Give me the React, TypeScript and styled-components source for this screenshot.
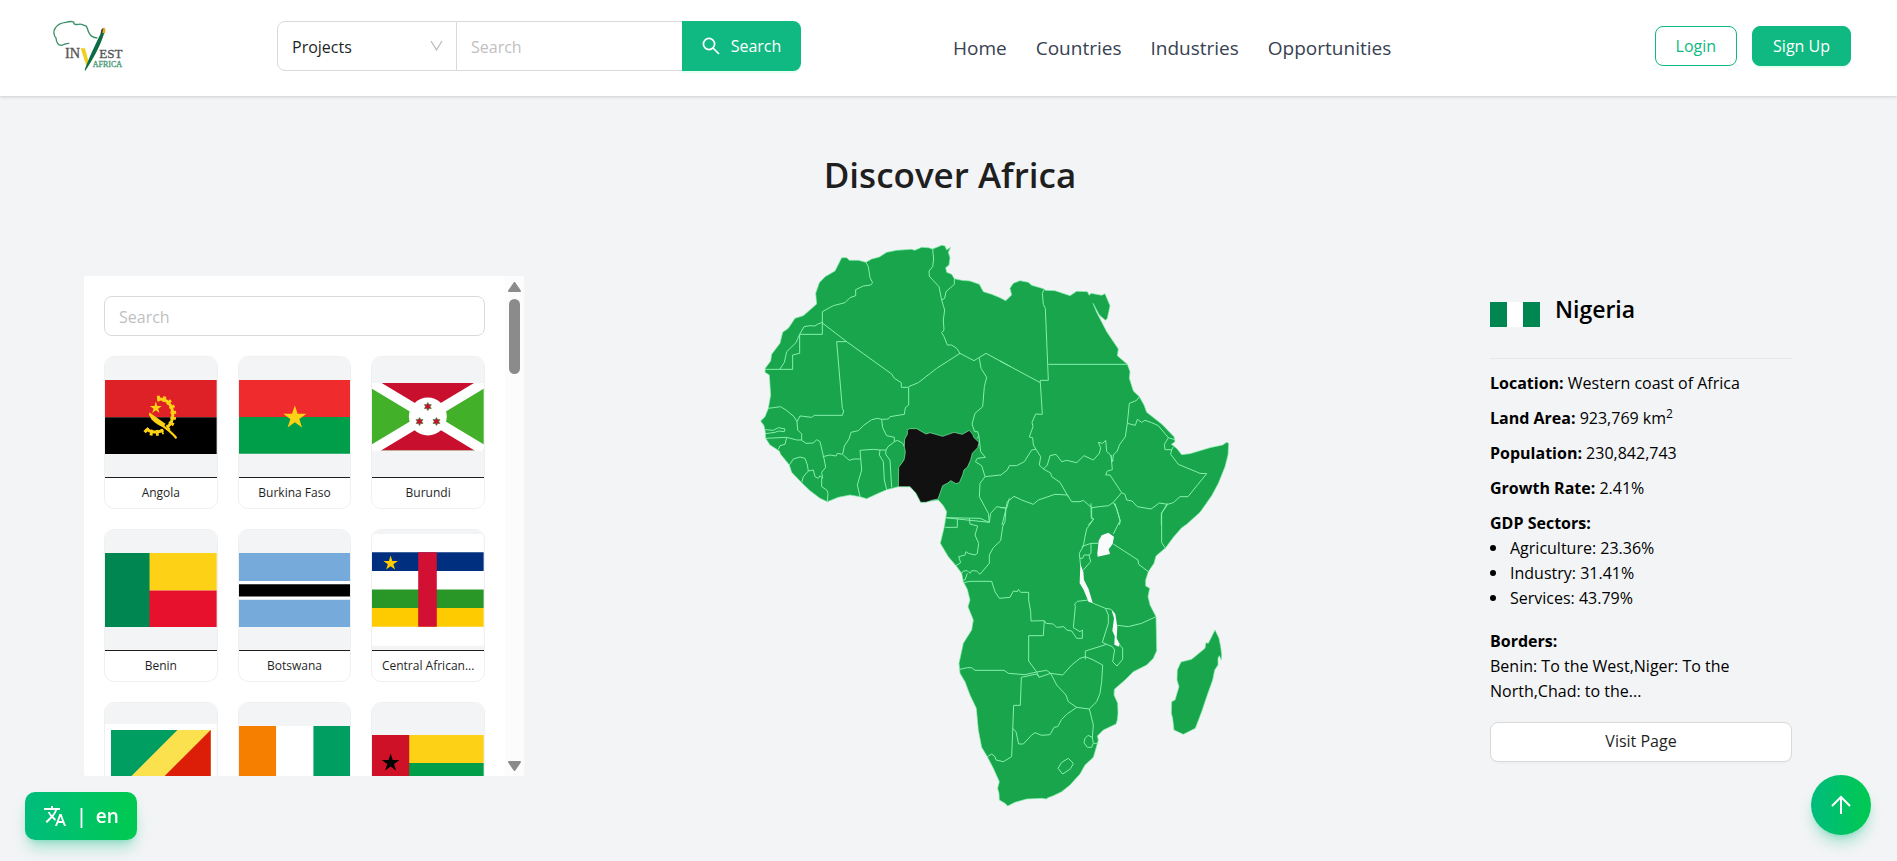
import React from "react";
import styled, { createGlobalStyle } from "styled-components";
import { MdTranslate } from "react-icons/md";

const GlobalStyle = createGlobalStyle`
  *, *::before, *::after { box-sizing: border-box; }
  body {
    margin: 0;
    background: #f3f4f6;
    color: #1f1f1f;
    font-family: "Open Sans", "Noto Sans", sans-serif;
    font-size: 16px;
  }
  button, input, select { font: inherit; }
  h1, h2, p, ul { margin: 0; padding: 0; }
`;

const Header = styled.header`
  display: flex;
  align-items: center;
  height: 96px;
  padding: 0 46px 4px 40px;
  background: #fff;
  box-shadow: 0 1px 3px rgba(0, 0, 0, 0.16);
`;

const LogoLink = styled.a`
  display: block;
  flex: none;
  height: 70px;
`;

const SearchForm = styled.form`
  display: flex;
  width: 524px;
  height: 50px;
  margin-left: 137px;
`;

const SelectWrap = styled.div`
  display: grid;
  flex: none;
  width: 180px;
  align-items: center;
  border: 1px solid #d9d9d9;
  border-radius: 8px 0 0 8px;

  > * { grid-area: 1 / 1; }
  > svg { justify-self: end; margin-right: 13px; pointer-events: none; }
`;

const Select = styled.select`
  width: 100%;
  height: 100%;
  padding: 2px 14px 0;
  border: 0;
  background: transparent;
  color: #1f1f1f;
  appearance: none;
  outline: none;
`;

const TextInput = styled.input`
  padding: 2px 14px 0;
  background: #fff;
  outline: none;
  &::placeholder { color: #bfbfbf; }
`;

const SearchInput = styled(TextInput)`
  flex: 1;
  min-width: 0;
  border: solid #d9d9d9;
  border-width: 1px 0;
`;

const SearchButton = styled.button`
  display: flex;
  flex: none;
  width: 119px;
  align-items: center;
  justify-content: center;
  gap: 11px;
  padding: 0;
  border: 0;
  border-radius: 0 8px 8px 0;
  background: #10b981;
  color: #fff;
  box-shadow: 0 2px 0 rgba(5, 255, 105, 0.1);
`;

const Nav = styled.nav`
  display: flex;
  gap: 29px;
  margin: 4px auto 0 152px;
`;

const NavLink = styled.a`
  color: #374151;
  font-size: 19px;
  line-height: 28px;
  text-decoration: none;
`;

const Actions = styled.div`
  display: flex;
  gap: 15px;
`;

const ActionButton = styled.button<{ $solid?: boolean }>`
  height: 40px;
  padding: 0 20px;
  border: 1px solid #10b981;
  border-radius: 8px;
  background: ${(p) => (p.$solid ? "#10b981" : "#fff")};
  color: ${(p) => (p.$solid ? "#fff" : "#10b981")};
  box-shadow: ${(p) => (p.$solid ? "0 2px 0 rgba(5, 255, 105, 0.1)" : "none")};
`;

const Main = styled.main`
  padding: 49px 105px 50px 84px;
`;

const Title = styled.h1`
  margin-bottom: 38px;
  padding-left: 24px;
  font-size: 35px;
  font-weight: 600;
  line-height: 60px;
  text-align: center;
`;

const Columns = styled.div`
  display: grid;
  grid-template-columns: 440px 1fr 302px;
  align-items: center;
`;

const Panel = styled.section`
  display: flex;
  height: 500px;
  background: #fcfcfc;
`;

const PanelBody = styled.div`
  flex: 1;
  height: 100%;
  padding: 20px;
  overflow-y: auto;
  scrollbar-width: none;
  border-radius: 5px;
  background: #fff;
`;

const FilterInput = styled(TextInput)`
  display: block;
  width: 100%;
  height: 40px;
  margin-bottom: 20px;
  border: 1px solid #d9d9d9;
  border-radius: 8px;
`;

const CardGrid = styled.div`
  display: grid;
  grid-template-columns: repeat(3, minmax(0, 1fr));
  gap: 20px;
`;

const Card = styled.article`
  overflow: hidden;
  border: 1px solid #f0f0f0;
  border-radius: 10px;
  background: #fff;
`;

const CardFlag = styled.div`
  display: flex;
  height: 121px;
  align-items: center;
  border-bottom: 1px solid #1f1f1f;
  background: #f3f4f6;
  svg { display: block; width: 100%; height: auto; }
`;

const CardName = styled.p`
  padding: 5px 8px;
  overflow: hidden;
  font-size: 12px;
  line-height: 20px;
  text-align: center;
  text-overflow: ellipsis;
  white-space: nowrap;
`;

const ScrollBar = styled.div`
  display: flex;
  flex-direction: column;
  align-items: center;
  width: 19px;
  padding: 6px 0 5px;
  svg { display: block; }
`;

const ScrollThumb = styled.div`
  width: 11px;
  height: 75px;
  margin: 7px 0 auto;
  border-radius: 6px;
  background: #8b8b8b;
`;

const MapArea = styled.div`
  display: flex;
  justify-content: center;
  padding-right: 26px;
  svg { display: block; }
`;

const Info = styled.aside`
  color: #000;
  line-height: 25px;
`;

const InfoHead = styled.div`
  display: flex;
  align-items: flex-end;
  gap: 15px;
  padding-bottom: 31px;
  margin-bottom: 12px;
  border-bottom: 1px solid #e5e7eb;
  svg { display: block; }
`;

const InfoName = styled.h2`
  font-size: 23px;
  font-weight: 600;
  line-height: 36px;
`;

const Fact = styled.p`
  margin-bottom: 10px;
  sup { font-size: 12px; line-height: 0; }
`;

const Block = styled.div`
  margin-bottom: 18px;
`;

const Sectors = styled.ul`
  list-style: none;
`;

const Sector = styled.li`
  display: flex;
  align-items: center;
  gap: 14px;
  &::before {
    width: 6px;
    height: 6px;
    border-radius: 50%;
    background: #000;
    content: "";
  }
`;

const VisitButton = styled.button`
  display: block;
  width: 100%;
  height: 40px;
  border: 1px solid #d9d9d9;
  border-radius: 8px;
  background: #fff;
  color: #1f1f1f;
  box-shadow: 0 2px 0 rgba(0, 0, 0, 0.02);
`;

const Floating = styled.button`
  position: fixed;
  display: flex;
  align-items: center;
  justify-content: center;
  border: 0;
  background: linear-gradient(to right, #00bc7d, #00c950);
  color: #fff;
  box-shadow: 0 10px 15px -3px rgba(0, 188, 125, 0.35), 0 4px 6px -4px rgba(0, 188, 125, 0.35);
`;

const LanguageButton = styled(Floating)`
  bottom: 21px;
  left: 25px;
  width: 112px;
  height: 48px;
  gap: 9px;
  border-radius: 10px;
  font-size: 19px;
  font-weight: 600;
`;

const TopButton = styled(Floating)`
  right: 26px;
  bottom: 26px;
  width: 60px;
  height: 60px;
  border-radius: 50%;
`;

function starPoints(cx: number, cy: number, r: number, points = 5, inner = 0.382) {
  return Array.from({ length: points * 2 }, (_, i) => {
    const a = (Math.PI * i) / points - Math.PI / 2;
    const d = i % 2 ? r * inner : r;
    return `${(cx + d * Math.cos(a)).toFixed(1)},${(cy + d * Math.sin(a)).toFixed(1)}`;
  }).join(" ");
}

const Angola = () => (
  <svg viewBox="0 0 336 225">
    <path fill="#de2027" d="M0 0h336v112H0z" />
    <path fill="#000" d="M0 112h336v113H0z" />
    <g fill="none" stroke="#fcd116">
      <path strokeWidth="9" d="M157 58C188 54 204 78 204 104C204 122 196 136 186 142M124 146C134 158 158 160 176 151" />
      <path strokeWidth="17" strokeDasharray="8 9" d="M157 56C190 52 206 78 206 104C206 122 198 138 188 144M122 148C134 162 158 162 174 154" />
      <path strokeWidth="7" strokeLinecap="round" d="M136 104C152 128 190 144 213 173" />
    </g>
    <path fill="#fcd116" d="M133 97L182 132L176 142C150 132 133 118 133 97z" />
    <polygon fill="#fcd116" points={starPoints(153, 84, 19)} />
  </svg>
);

const BurkinaFaso = () => (
  <svg viewBox="0 0 336 222">
    <path fill="#ef2b2d" d="M0 0h336v111H0z" />
    <path fill="#009e49" d="M0 111h336v111H0z" />
    <polygon fill="#fcd116" points={starPoints(168, 113, 37)} />
  </svg>
);

const Burundi = () => (
  <svg viewBox="0 0 336 202">
    <path fill="#43b02a" d="M0 0h336v202H0z" />
    <path fill="#c8102e" d="M0 0h336L168 101L336 202H0L168 101z" />
    <path stroke="#fff" strokeWidth="30" d="M0 0L336 202M336 0L0 202" />
    <circle cx="168" cy="101" r="57" fill="#fff" />
    <g fill="#c8102e" stroke="#43803a" strokeWidth="2">
      <polygon points={starPoints(168, 71, 12, 6, 0.577)} />
      <polygon points={starPoints(143, 116, 12, 6, 0.577)} />
      <polygon points={starPoints(194, 116, 12, 6, 0.577)} />
    </g>
  </svg>
);

const Benin = () => (
  <svg viewBox="0 0 336 225">
    <path fill="#fcd116" d="M0 0h336v113H0z" />
    <path fill="#e8112d" d="M0 113h336v112H0z" />
    <path fill="#008751" d="M0 0h134v225H0z" />
  </svg>
);

const Botswana = () => (
  <svg viewBox="0 0 336 225">
    <path fill="#75aadb" d="M0 0h336v225H0z" />
    <path fill="#fff" d="M0 84h336v57H0z" />
    <path fill="#000" d="M0 94h336v37H0z" />
  </svg>
);

const CentralAfrica = () => (
  <svg viewBox="0 0 336 336">
    <path fill="#fff" d="M0 0h336v336H0z" />
    <path fill="#002f7f" d="M0 55h336v56H0z" />
    <path fill="#289728" d="M0 167h336v56H0z" />
    <path fill="#fecb00" d="M0 223h336v56H0z" />
    <path fill="#d21034" d="M139 55h56v224h-56z" />
    <polygon fill="#fecb00" points={starPoints(56, 88, 23)} />
  </svg>
);

const Congo = () => (
  <svg viewBox="0 0 336 236">
    <path fill="#fff" d="M0 0h336v236H0z" />
    <path fill="#009e60" d="M18 18h300v200H18z" />
    <path fill="#fbe14d" d="M218 18h100v200H18z" />
    <path fill="#dc1e08" d="M318 18v200H118z" />
  </svg>
);

const IvoryCoast = () => (
  <svg viewBox="0 0 336 225">
    <path fill="#f77f00" d="M0 0h112v225H0z" />
    <path fill="#fff" d="M112 0h112v225H112z" />
    <path fill="#009e60" d="M224 0h112v225H224z" />
  </svg>
);

const GuineaBissau = () => (
  <svg viewBox="0 0 336 168">
    <path fill="#fcd116" d="M0 0h336v84H0z" />
    <path fill="#009e49" d="M0 84h336v84H0z" />
    <path fill="#ce1126" d="M0 0h112v168H0z" />
    <polygon fill="#000" points={starPoints(56, 84, 28)} />
  </svg>
);

const countries = [
  { name: "Angola", Flag: Angola },
  { name: "Burkina Faso", Flag: BurkinaFaso },
  { name: "Burundi", Flag: Burundi },
  { name: "Benin", Flag: Benin },
  { name: "Botswana", Flag: Botswana },
  { name: "Central African...", Flag: CentralAfrica },
  { name: "Congo", Flag: Congo },
  { name: "Ivory Coast", Flag: IvoryCoast },
  { name: "Guinea-Bissau", Flag: GuineaBissau },
];

const Logo = () => (
  <svg width="100" height="70" viewBox="0 3 300 210" role="img" aria-label="Invest Africa">
    <path
      fill="none"
      stroke="#3d8f68"
      strokeWidth="4"
      d="M88 100C80 99 74 104 64 106C52 106 49 96 48 84C40 76 40 62 46 54C54 40 66 38 78 37C88 34 96 34 101 36C100 44 108 44 116 43C124 40 130 46 138 48C144 54 142 62 148 70C152 78 160 83 172 84"
    />
    <g fontFamily="Liberation Serif, serif">
      <text x="75" y="145" fontSize="43" fill="#555" stroke="#555">IN</text>
      <text x="178" y="145" fontSize="39" fill="#555" stroke="#555">EST</text>
      <text x="158" y="171" fontSize="24" fill="#4c9a76" stroke="#4c9a76">AFRICA</text>
    </g>
    <path fill="#f2cf1f" d="M122 115h13l10 38l-6 14z" />
    <path fill="#0d6b45" d="M184 66L193 68C182 105 158 150 136 182L134 180C146 145 168 100 184 66z" />
    <path fill="#dcae1c" d="M184 66C184 58 190 52 194 54C198 60 196 66 194 71z" />
    <path fill="#3c3c3c" d="M182 70C182 60 186 55 190 54L186 72z" />
  </svg>
);

const coast =
  "M275 68L290 68L298 76L325 76L348 82L365 72L388 66L410 52L440 46L485 43L494 46L515 37L535 38L548 42L575 31L585 33L590 45L602 37L595 52L600 68L597 90L587 98L590 112L605 118L613 131L635 136L660 138L688 148L700 170L725 178L750 188L767 197L785 180L780 160L790 145L810 137L835 142L845 151L883 162L885 166L915 167L960 182L980 169L1012 170L1018 181L1023 175L1055 181L1065 176L1080 212L1072 250L1066 256L1048 240L1029 205L1040 232L1070 290L1105 342L1102 362L1132 388L1140 410L1138 430L1150 468L1168 485L1182 510L1190 532L1235 567L1272 605L1275 620L1264 628L1280 640L1295 659L1320 656L1380 638L1418 630L1430 622L1436 625L1434 660L1425 695L1405 745L1385 782L1350 832L1310 868L1295 878L1270 907L1247 938L1218 963L1212 985L1195 1010L1187 1035L1187 1053L1199 1060L1194 1085L1200 1110L1218 1145L1219 1190L1220 1247L1210 1270L1190 1290L1150 1310L1125 1335L1093 1363L1092 1380L1103 1405L1104 1435L1102 1455L1098 1467L1060 1485L1042 1503L1045 1515L1035 1550L1030 1567L1005 1590L990 1617L960 1650L935 1670L910 1682L892 1689L890 1692L875 1690L830 1692L795 1702L773 1713L765 1705L748 1695L747 1675L743 1660L748 1640L730 1600L712 1565L695 1537L685 1485L679 1420L660 1380L645 1340L630 1315L627 1285L640 1225L665 1185L670 1155L654 1115L660 1095L652 1063L640 1040L635 1015L618 992L595 965L571 925L583 875L590 830L580 812L565 795L530 800L512 802L498 775L480 755L445 755L410 764L385 775L350 791L330 785L300 780L265 787L232 800L210 790L180 767L155 743L125 712L118 690L92 658L88 648L60 630L47 610L46 590L42 572L32 558L45 545L55 520L62 480L58 420L45 412L46 400L62 378L65 358L90 325L98 292L115 280L135 250L160 242L200 207L197 175L208 143L225 125L255 108z";

const nigeria =
  "M478 581L500 581L528 597L540 593L578 604L612 592L637 598L658 586L668 598L672 608L687 622L683 638L667 655L662 675L652 697L642 705L638 720L628 743L618 746L602 737L594 744L578 752L570 775L564 792L545 796L528 802L512 802L498 775L480 755L445 755L446 697L462 675L466 652L463 635L464 612L472 598L472 586z";

const madagascar =
  "M615 390L627 415L632 440L635 465L634 480L628 467L624 475L624 495L614 510L608 540L590 590L575 635L556 685L520 703L492 690L488 655L484 640L485 605L495 600L507 560L501 540L502 510L513 486L545 478L585 445L588 428L595 430L605 410z";

// Borders of the north-west, the north-east and the south of the continent.
const bordersNorthWest =
  "M348 82L355 95L360 128L368 143L362 150L340 153L317 164V182L300 188L285 203L250 212L217 230V298H149M217 262L202 268L195 273L180 272L162 275L149 298L138 323L110 350L103 382L90 402M149 298V355L128 360V403H46M217 264L290 320H260L277 520L281 528L277 541H193L185 547L160 544L150 543L141 560L132 545L108 525L92 515L70 518L55 520M290 320L425 417L433 430L454 443V457H476V510L466 518L463 538L420 545L415 552L395 553L383 550L365 554L340 572L325 587L303 592L297 612L283 633L278 658L262 655L258 663L240 660L218 665M476 455L505 443L560 400L630 355L672 377L708 355L780 394M548 42L551 72L548 95L537 108L538 124L567 155L575 195L584 190L588 170L613 148V131M575 195L584 225L580 255L582 285L575 293L582 305L592 330L605 330L620 340L630 355M688 370L693 400L710 427L703 455L698 515L675 535L666 567L674 590H683L687 605L680 610M395 553L398 578L410 602L433 607V620L414 635L408 645L390 645L370 643L330 646L335 705L322 750L330 785M433 620L443 616L458 625L463 635M390 645L388 660L400 680L403 735L410 764M408 645L407 658L420 675L425 757M330 672L310 672L298 676L280 660M141 560L143 585L155 597V616L168 625L190 624L200 614L210 620L217 650L223 675L227 697L215 712L218 730L210 722L205 730L195 725L190 705L175 708L172 690L165 670L150 666L130 672L118 690M175 708L160 725L155 743M215 730V755L230 765L234 775L232 800M47 610L110 607L140 615H155M110 607L105 628L90 632L85 643M46 584L70 586L85 578L105 582L103 590L85 588L75 592L46 596M687 605L692 650L706 667L682 670L676 680L695 692L705 725L690 745L688 785L715 835L718 862L585 848M705 725L750 720M718 862L722 835L740 815L770 820L778 790";

const bordersNorthEast =
  "M133 162L127 175L130 208L136 220L145 436H121V443L0 378M145 388H382M121 443L127 538L107 537L96 562L99 575L88 606L98 608L100 630L108 643L95 645L73 680L50 692H28L22 705L0 722M108 643L122 665L118 690L130 702L142 690L150 662L168 658L185 680L200 676L230 683L252 662L280 675L298 655L302 638L295 622L308 625L317 616L320 650L332 660L338 680L340 660L352 648L358 630L376 605L382 565L388 505L410 496L418 485M382 565L406 571L412 553L425 562L435 556L455 563L475 572L505 608L524 614M505 608L493 628L495 644H515L520 636M515 644L512 658L535 688L600 715L620 716L564 785L540 785L520 803L503 808L484 835V870M503 808L478 804L453 822L412 815L396 798L380 795L375 778L365 773L330 720L317 720L322 708L337 704L333 660M365 773L340 802L326 812L298 815L275 818L250 796L240 800L215 800L202 780L180 742L155 725L152 714L130 702M202 780L165 778L115 795L100 808L65 795L42 784L22 800L16 830L6 870M202 780L206 786M275 818V848L281 852L265 870M340 802L351 823L361 858L358 870M0 818H17";

const bordersSouth =
  "M633 10L634 55L641 57L620 87L615 110L610 138L598 160L602 200M654 130H633L610 138L605 140M633 130V160L627 165H612L608 175H600M627 165L632 185L610 210M705 10L720 62L700 102M700 132L774 180L776 193L805 215M862 10L845 40V128L857 146M196 82H232V55M196 53L300 55L328 67M268 55L270 72L293 78L285 105L296 130L292 160L285 165L265 160L258 155L255 165L236 170L242 188L228 197M378 25L375 65L368 80L362 122L340 143L328 165V190L300 223L290 213L275 212L270 220L262 212L250 213L245 220M262 220L255 240H250M250 248L270 244H335L345 275L358 295L390 292L400 273L412 275L415 268L422 277H446V300L452 335L453 363L493 362L498 370L520 372L530 382L552 380L560 390L575 393L590 415H607V390L600 395L580 383L586 320L584 312L592 304L625 300L640 310L676 325L694 328M493 362L490 407H446V483L470 516L435 524L385 520L372 511H285L275 503H262L240 508M470 516L500 511L512 520L548 525L575 495L600 475L616 470L636 478L668 495L665 545L660 580L650 605L628 627L640 675L637 715M616 478V453L680 433L697 440L704 450L698 485L711 498L728 478V445L720 436L718 430M676 325L685 345V370L667 427L680 433M712 376L745 380L785 370L828 350M470 516L477 532L512 520L530 555L558 585L565 605L590 622L628 627M477 532L470 522L424 532L421 616H401L395 770L370 785L348 780L345 770L335 762L322 770M398 685L408 695L416 732H430L455 705L465 698L485 706L510 704L522 682L533 680L545 658L560 643L590 622M624 706L615 715L612 728L622 742H635L640 730L637 712zM640 730H655M565 775L580 790L572 806L548 822L534 805L545 787z";

const AfricaMap = () => (
  <svg width="472" height="566" viewBox="24 24 1416 1698" role="img" aria-label="Map of Africa">
    <g fill="#18a54b" stroke="#86efac" strokeWidth="2" strokeLinejoin="round">
      <path d={coast} />
      <path transform="translate(780 795)" d={madagascar} />
      <g fill="none" strokeWidth="3">
        <path d={bordersNorthWest} />
        <path transform="translate(750 0)" d={bordersNorthEast} />
        <path transform="translate(390 795)" d={bordersSouth} />
      </g>
      <path d={nigeria} fill="#111" />
    </g>
    <g transform="translate(390 795)" fill="#f9fafb">
      <path d="M685 98L702 110L698 132L686 148L690 162L653 170L652 160L656 122L665 106z" />
      <path d="M601 192L610 215L612 240L626 268L638 308L626 306L610 268L599 250z" />
      <path d="M694 328L706 342L712 380L710 415L718 430L717 440L703 434L704 408L697 392L702 355z" />
    </g>
  </svg>
);

export default function App() {
  return (
    <>
      <GlobalStyle />
      <Header>
        <LogoLink href="#"><Logo /></LogoLink>
        <SearchForm onSubmit={(e) => e.preventDefault()}>
          <SelectWrap>
            <Select aria-label="Search in" defaultValue="Projects">
              <option>Projects</option>
              <option>Countries</option>
            </Select>
            <svg width="13" height="12" viewBox="0 0 13 12" fill="none" stroke="#bfbfbf" strokeWidth="1.4">
              <path d="M1 1L6.500 10L12 1" />
            </svg>
          </SelectWrap>
          <SearchInput aria-label="Search" placeholder="Search" />
          <SearchButton type="submit">
            <svg width="18" height="18" viewBox="0 0 18 18" fill="none" stroke="currentColor" strokeWidth="1.7">
              <circle cx="7" cy="7" r="5.600" />
              <path d="M11 11L17 17" />
            </svg>
            Search
          </SearchButton>
        </SearchForm>
        <Nav>
          <NavLink href="#">Home</NavLink>
          <NavLink href="#">Countries</NavLink>
          <NavLink href="#">Industries</NavLink>
          <NavLink href="#">Opportunities</NavLink>
        </Nav>
        <Actions>
          <ActionButton>Login</ActionButton>
          <ActionButton $solid>Sign Up</ActionButton>
        </Actions>
      </Header>

      <Main>
        <Title>Discover Africa</Title>
        <Columns>
          <Panel>
            <PanelBody>
              <FilterInput aria-label="Search countries" placeholder="Search" />
              <CardGrid>
                {countries.map(({ name, Flag }) => (
                  <Card key={name}>
                    <CardFlag><Flag /></CardFlag>
                    <CardName>{name}</CardName>
                  </Card>
                ))}
              </CardGrid>
            </PanelBody>
            <ScrollBar aria-hidden="true">
              <svg width="13" height="10" viewBox="0 0 13 10">
                <path fill="#8b8b8b" stroke="#8b8b8b" strokeWidth="2" strokeLinejoin="round" d="M6.500 1L12 9H1z" />
              </svg>
              <ScrollThumb />
              <svg width="13" height="10" viewBox="0 0 13 10">
                <path fill="#8b8b8b" stroke="#8b8b8b" strokeWidth="2" strokeLinejoin="round" d="M6.500 9L12 1H1z" />
              </svg>
            </ScrollBar>
          </Panel>

          <MapArea><AfricaMap /></MapArea>

          <Info>
            <InfoHead>
              <svg width="50" height="25" viewBox="0 0 50 25">
                <path fill="#008751" d="M0 0h50v25H0z" />
                <path fill="#fff" d="M17 0h16v25H17z" />
              </svg>
              <InfoName>Nigeria</InfoName>
            </InfoHead>
            <Fact><b>Location:</b> Western coast of Africa</Fact>
            <Fact><b>Land Area:</b> 923,769 km<sup>2</sup></Fact>
            <Fact><b>Population:</b> 230,842,743</Fact>
            <Fact><b>Growth Rate:</b> 2.41%</Fact>
            <Block>
              <b>GDP Sectors:</b>
              <Sectors>
                <Sector>Agriculture: 23.36%</Sector>
                <Sector>Industry: 31.41%</Sector>
                <Sector>Services: 43.79%</Sector>
              </Sectors>
            </Block>
            <Block>
              <b>Borders:</b>
              <p>Benin: To the West,Niger: To the North,Chad: to the...</p>
            </Block>
            <VisitButton>Visit Page</VisitButton>
          </Info>
        </Columns>
      </Main>

      <LanguageButton aria-label="Language">
        <MdTranslate size={24} />
        <span>|</span>
        <span>en</span>
      </LanguageButton>
      <TopButton aria-label="Back to top">
        <svg width="20" height="20" viewBox="0 0 20 20" fill="none" stroke="currentColor" strokeWidth="2">
          <path d="M10 19V2M1 11L10 2L19 11" />
        </svg>
      </TopButton>
    </>
  );
}
